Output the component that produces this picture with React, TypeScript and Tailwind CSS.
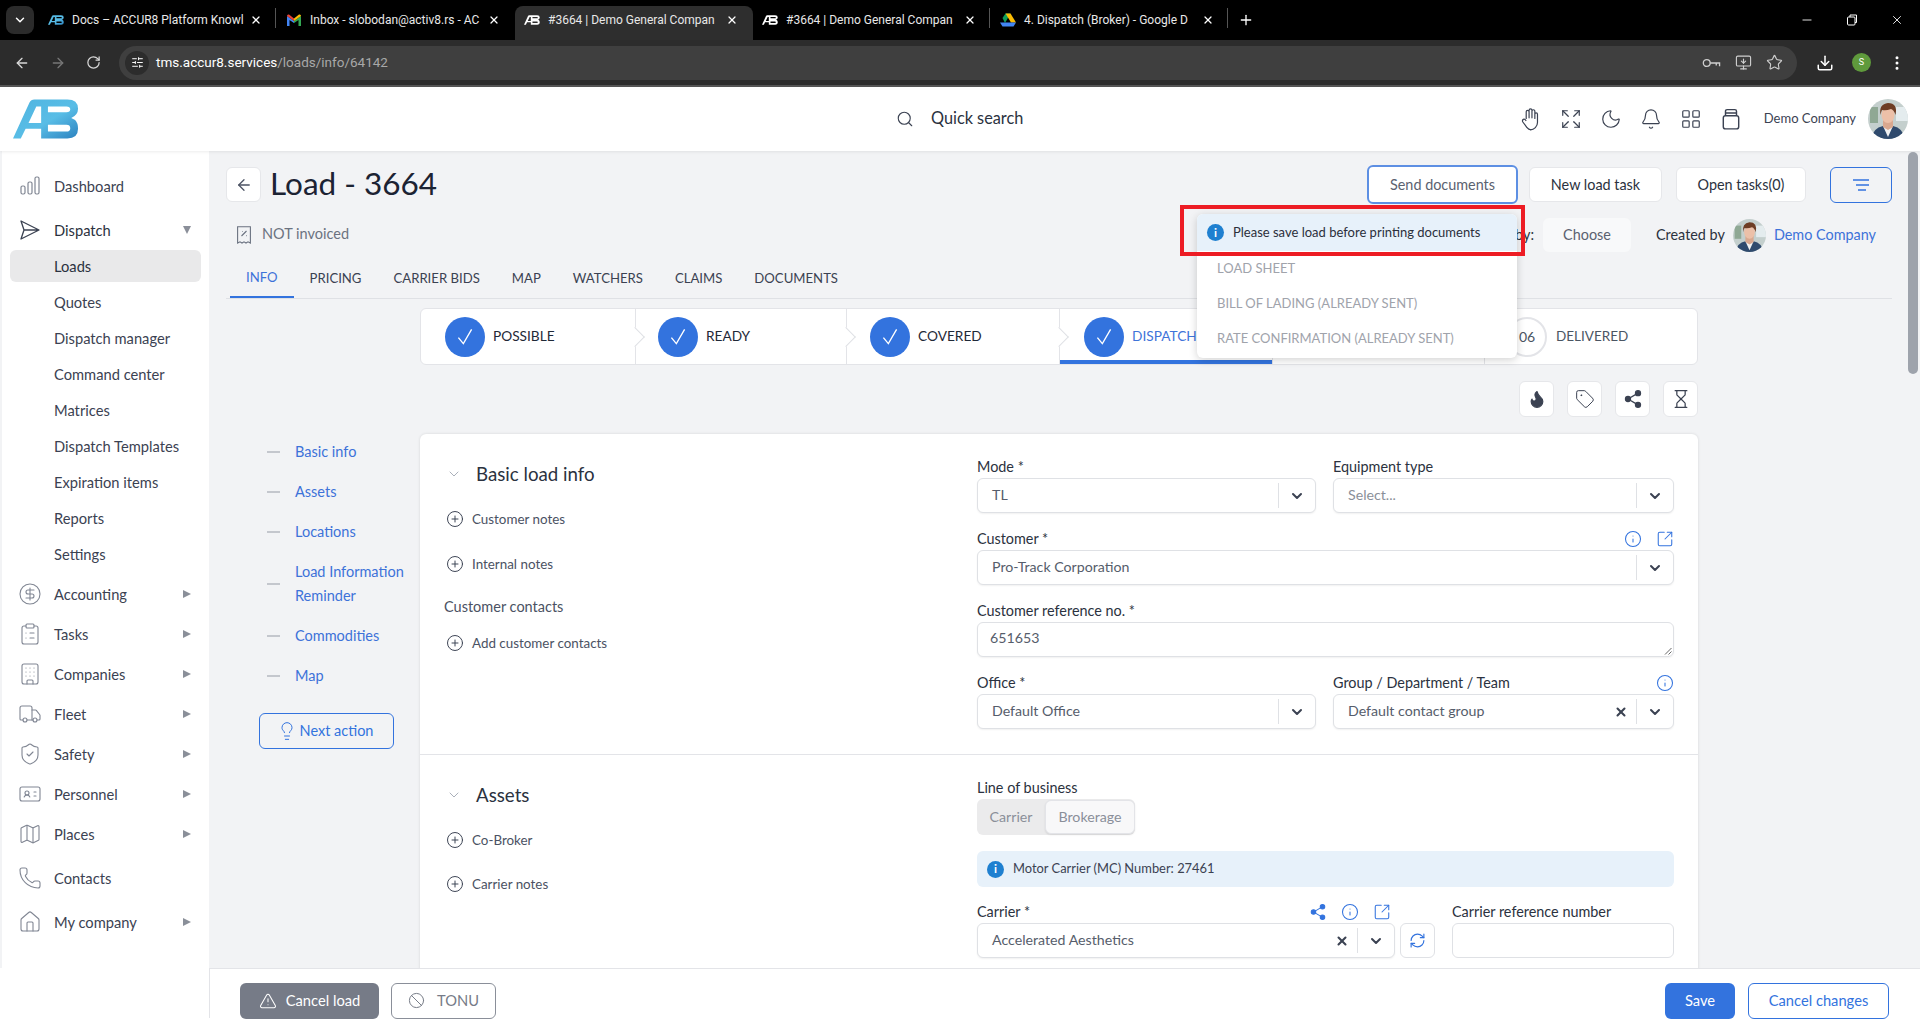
import type { ReactNode } from 'react'
import {
  ArrowLeft, ArrowRight, Ban, Bell, Building, ChevronDown, CircleDollarSign, CirclePlus, ClipboardList,
  Download, EllipsisVertical, Expand, Flame, Hourglass, House, IdCard, Info, LayoutGrid,
  Lightbulb, Map as MapIcon, Minus, MonitorDown, Moon, Phone, Plus, RefreshCw, RotateCw, Search, Share2,
  ShieldCheck, SlidersHorizontal, SquareArrowOutUpRight, Star, Tag, TriangleAlert, Truck, X,
} from 'lucide-react'

const Logo = ({ className }: { className: string }) => (
  <svg viewBox="0 0 68 42" className={className}>
    <defs>
      <linearGradient id="a8" x1="0" y1="0" x2="1" y2="1">
        <stop offset="0" stopColor="#4fb4e0" />
        <stop offset="0.55" stopColor="#59bde6" />
        <stop offset="1" stopColor="#2d83c0" />
      </linearGradient>
    </defs>
    <path
      fillRule="evenodd"
      fill="url(#a8)"
      d="M0 41 L17 4 Q18.5 1 22 1 H56 Q67 1 67 10.5 Q67 17 60 20 L64 22 Q67 25 67 31 Q67 41 56 41 H29 V31 H13 L8 41 Z
         M16 25 H29 V8 H24 Z
         M36 8 H55 Q59 8 59 11 Q59 14 55 14 H36 Z
         M36 27 H55 Q59 27 59 30.5 Q59 34 55 34 H36 Z"
    />
  </svg>
)

const Avatar = ({ className }: { className: string }) => (
  <div className={`overflow-hidden rounded-full ${className}`}>
    <svg viewBox="0 0 40 40" className="h-full w-full">
      <rect width="40" height="40" fill="#c4cfcd" />
      <rect x="2" y="8" width="8" height="16" fill="#8fa894" />
      <rect x="28" y="8" width="12" height="14" fill="#e4ecee" />
      <path d="M3 40 Q5 29 15 27 L25 27 Q35 29 37 40 Z" fill="#2f4a6d" />
      <path d="M15 27 L20 38 L25 27 Z" fill="#f1f1f1" />
      <path d="M15 20 H25 V28 L20 31 L15 28 Z" fill="#d9a88f" />
      <ellipse cx="20" cy="16" rx="6.5" ry="8" fill="#ecc0a8" />
      <path d="M12.5 16 Q10.5 5 20 4 Q30 4 27.5 16 Q26 11 23 10 Q18 12 14 11 Q13 13 12.5 16 Z" fill="#6e3d24" />
    </svg>
  </div>
)

const GmailIcon = () => (
  <svg viewBox="0 0 16 14" className="h-[14px] w-[16px] shrink-0">
    <path d="M1 13 V3 L8 8 V10 L3.5 7 V13 Z" fill="#4285f4" />
    <path d="M15 13 V3 L8 8 V10 L12.5 7 V13 Z" fill="#34a853" />
    <path d="M1 3 Q1 1 3 1.5 L8 5.5 V8 L1 3 Z" fill="#ea4335" />
    <path d="M15 3 Q15 1 13 1.5 L8 5.5 V8 Z" fill="#fbbc04" />
  </svg>
)

const DriveIcon = () => (
  <svg viewBox="0 0 16 14" className="h-[14px] w-[16px] shrink-0">
    <path d="M5.5 0.5 H10.5 L5 10 L2.5 5 Z" fill="#0f9d58" />
    <path d="M10.5 0.5 L16 9.5 H11 L5.5 0.5 Z" fill="#fbbc04" />
    <path d="M0 9.5 H16 L13.5 13.5 H2.5 Z" fill="#4285f4" />
  </svg>
)

const KeyIcon = () => (
  <svg viewBox="0 0 20 12" fill="none" stroke="currentColor" strokeWidth="1.4" className="h-[12px] w-[19px]">
    <circle cx="5" cy="6" r="3.6" />
    <path d="M8.6 6 H18.5 V9.5 M15 6 V8.5" />
  </svg>
)

const HandIcon = () => (
  <svg viewBox="0 0 20 20" fill="none" stroke="#3b4252" strokeWidth="1" strokeLinejoin="round" className="h-[24px] w-[24px]">
    <path d="M6 10 V4 a1.2 1.2 0 0 1 2.4 0 V9 V2.7 a1.2 1.2 0 0 1 2.4 0 V9 V3.5 a1.2 1.2 0 0 1 2.4 0 V9.5 V6 a1.1 1.1 0 0 1 2.2 0 V13 a6 6 0 0 1 -6 6 H10 Q8 19 6.5 17 L3.2 12.5 Q2.4 11 3.6 10.3 Q4.8 9.8 6 11.5" />
  </svg>
)

const DashboardIcon = () => (
  <svg viewBox="0 0 20 20" fill="none" stroke="#808693" strokeWidth="1.2" className="h-5 w-5">
    <rect x="1" y="10" width="4" height="8" rx="1.5" />
    <rect x="8" y="6" width="4" height="12" rx="1.5" />
    <rect x="15" y="1" width="4" height="17" rx="1.5" />
  </svg>
)

const PlaneIcon = () => (
  <svg viewBox="0 0 20 20" fill="none" stroke="#3b4252" strokeWidth="1.3" strokeLinejoin="round" className="h-5 w-5">
    <path d="M1 1 L19 10 L1 19 L4 10 Z M4 10 H19" />
  </svg>
)

const JarIcon = () => (
  <svg viewBox="0 0 20 20" fill="none" stroke="#3b4252" strokeWidth="1.3" className="h-[22px] w-[22px]">
    <rect x="3" y="7" width="14" height="12" rx="2" />
    <path d="M5 7 V3 Q5 1.5 6.5 1.5 H13.5 Q15 1.5 15 3 V7 M5 4.5 H15" />
  </svg>
)

const ReceiptIcon = () => (
  <svg viewBox="0 0 14 18" fill="none" stroke="#6b7280" strokeWidth="1.1" className="h-[18px] w-[14px]">
    <path d="M0.6 17 V0.8 H13.4 V17 L11 15.8 L9 17 L7 15.8 L5 17 L3 15.8 Z" />
    <path d="M4.5 10 L9.5 5 M5 5.5 h0.6 M9 9.6 h0.6" />
  </svg>
)

const dispatchItems = ['Loads', 'Quotes', 'Dispatch manager', 'Command center', 'Matrices', 'Dispatch Templates', 'Expiration items', 'Reports', 'Settings']

const iconClass = 'h-6 w-6 text-[#808693]'
const sections = [
  { label: 'Accounting', icon: <CircleDollarSign className={iconClass} strokeWidth={1.1} /> },
  { label: 'Tasks', icon: <ClipboardList className={iconClass} strokeWidth={1.1} /> },
  { label: 'Companies', icon: <Building className={iconClass} strokeWidth={1.1} /> },
  { label: 'Fleet', icon: <Truck className={iconClass} strokeWidth={1.1} /> },
  { label: 'Safety', icon: <ShieldCheck className={iconClass} strokeWidth={1.1} /> },
  { label: 'Personnel', icon: <IdCard className={iconClass} strokeWidth={1.1} /> },
  { label: 'Places', icon: <MapIcon className={iconClass} strokeWidth={1.1} /> },
]

function Tab({ icon, title, active, sep }: { icon: ReactNode; title: string; active?: boolean; sep?: boolean }) {
  return (
    <div className={`relative mb-0 flex h-[34px] w-[238px] shrink-0 items-center rounded-t-lg pb-[6px] pl-[9px] pr-[15px] ${active ? 'bg-[#2e2e2e]' : ''}`}>
      {icon}
      <span className="ml-2 w-[167px] whitespace-nowrap text-[12px] text-[#e8e8e8]">{title}</span>
      <X className="ml-auto h-[12px] w-[12px] text-white" strokeWidth={2.5} />
      {sep && <span className="absolute right-[1px] top-[2px] h-[20px] w-px bg-[#555]" />}
    </div>
  )
}

const TabLogo = ({ white }: { white?: boolean }) => (
  <span className={white ? 'shrink-0 brightness-0 invert' : 'shrink-0'}>
    <Logo className="h-[12px] w-[16px]" />
  </span>
)

function ChromeBar() {
  return (
    <>
      <div className="flex h-[40px] items-end bg-black pl-[6px]">
        <div className="mb-[6px] flex h-[28px] w-[28px] items-center justify-center rounded-lg bg-[#2b2b2b]">
          <ChevronDown className="h-[14px] w-[14px] text-white" strokeWidth={2.5} />
        </div>
        <div className="ml-[5px] flex items-end">
          <Tab sep icon={<TabLogo />} title="Docs – ACCUR8 Platform Knowl" />
          <Tab icon={<GmailIcon />} title="Inbox - slobodan@activ8.rs - AC" />
          <Tab active icon={<TabLogo white />} title="#3664 | Demo General Compan" />
          <Tab sep icon={<TabLogo white />} title="#3664 | Demo General Compan" />
          <Tab sep icon={<DriveIcon />} title="4. Dispatch (Broker) - Google D" />
          <Plus className="mb-[12px] ml-[9px] h-[16px] w-[16px] text-white" strokeWidth={2} />
        </div>
        <div className="ml-auto mb-[13px] flex items-center gap-[32px] pr-[16px]">
          <Minus className="h-[14px] w-[14px] text-white" strokeWidth={1.5} />
          <svg viewBox="0 0 12 12" fill="none" stroke="white" className="h-[12px] w-[12px]">
            <rect x="1.5" y="3" width="7.5" height="8" rx="1" />
            <path d="M4 3 V1 H10.5 V8.5 H9" />
          </svg>
          <X className="h-[14px] w-[14px] text-white" strokeWidth={1.5} />
        </div>
      </div>
      <div className="flex h-[47px] items-center border-b-2 border-[#555] bg-[#2c2c2c] pl-[14px] pr-[14px]">
        <ArrowLeft className="h-[16px] w-[16px] text-[#d8d8d8]" strokeWidth={2} />
        <ArrowRight className="ml-[20px] h-[16px] w-[16px] text-[#777]" strokeWidth={2} />
        <RotateCw className="ml-[20px] h-[15px] w-[15px] text-[#d8d8d8]" strokeWidth={2} />
        <div className="ml-[18px] flex h-[34px] w-[1678px] items-center rounded-full bg-[#3f3f3f] pl-[6px]">
          <div className="flex h-[24px] w-[24px] items-center justify-center rounded-full bg-[#2c2c2c]">
            <SlidersHorizontal className="h-[13px] w-[13px] text-white" strokeWidth={1.8} />
          </div>
          <span className="ml-[7px] text-[13.5px] text-white">
            tms.accur8.services<span className="text-[#a8a8a8]">/loads/info/64142</span>
          </span>
          <div className="ml-auto flex items-center gap-[14px] pr-[14px] text-[#cfcfcf]">
            <KeyIcon />
            <MonitorDown className="h-[17px] w-[17px]" strokeWidth={1.6} />
            <Star className="h-[17px] w-[17px]" strokeWidth={1.6} />
          </div>
        </div>
        <Download className="ml-[19px] h-[18px] w-[18px] text-white" strokeWidth={2} />
        <div className="ml-[18px] flex h-[19px] w-[19px] items-center justify-center rounded-full bg-[#5f9a3c] text-[9px] text-white">S</div>
        <EllipsisVertical className="ml-[17px] h-[18px] w-[18px] text-white" strokeWidth={2} />
      </div>
    </>
  )
}

function AppHeader() {
  const cls = 'h-[22px] w-[22px] text-[#3b4252]'
  return (
    <header className="relative z-10 flex h-[64px] items-center bg-white pl-[13px] pr-[12px] shadow-[0_1px_3px_rgba(0,0,0,0.08)]">
      <Logo className="h-[42px] w-[66px]" />
      <div className="ml-[817px] flex items-center">
        <Search className="h-[18px] w-[18px] text-[#3b4252]" strokeWidth={1.5} />
        <span className="ml-[17px] pb-[1px] text-[16.3px] text-[#2b3240]">Quick search</span>
      </div>
      <div className="ml-auto flex items-center gap-[18px]">
        <span className="-mx-[1px]"><HandIcon /></span>
        <Expand className={cls} strokeWidth={1.3} />
        <Moon className={cls} strokeWidth={1.3} />
        <Bell className={cls} strokeWidth={1.3} />
        <LayoutGrid className={cls} strokeWidth={1.3} />
        <JarIcon />
        <span className="ml-[4px] text-[13px] text-[#3b4252]">Demo Company</span>
        <Avatar className="-ml-[6px] h-[40px] w-[40px]" />
      </div>
    </header>
  )
}

const Caret = ({ down }: { down?: boolean }) => (
  <span className={`ml-auto mr-[18px] h-0 w-0 border-transparent ${down ? 'border-x-[4px] border-t-[8px] border-t-[#8a8f99]' : 'border-y-[4px] border-l-[8px] border-l-[#8a8f99]'}`} />
)

function Sidebar() {
  return (
    <aside className="h-[817px] w-[209px] shrink-0 border-l-2 border-[#f2f3f5] bg-white pt-[17px] text-[14.7px] text-[#3b4252]">
      <div className="flex h-[36px] items-center">
        <span className="ml-[18px] w-[34px]"><DashboardIcon /></span>
        Dashboard
      </div>
      <div className="mt-[8px] flex h-[36px] items-center text-[#2b3240]">
        <span className="ml-[18px] w-[34px]"><PlaneIcon /></span>
        Dispatch
        <Caret down />
      </div>
      <div className="mt-[2px] flex flex-col gap-[4px] pl-[8px] pr-[8px]">
        {dispatchItems.map((label, i) => (
          <div key={label} className={`flex h-[32px] items-center rounded-md pl-[44px] ${i === 0 ? 'bg-[#e9e9ea] text-[#2b3240]' : ''}`}>
            {label}
          </div>
        ))}
      </div>
      <div className="mt-[4px]">
        {sections.map((s) => (
          <div key={s.label} className="flex h-[40px] items-center">
            <span className="ml-[16px] w-[36px]">{s.icon}</span>
            {s.label}
            <Caret />
          </div>
        ))}
      </div>
      <div className="mt-[4px] flex h-[40px] items-center">
        <span className="ml-[16px] w-[36px]"><Phone className={iconClass} strokeWidth={1.1} /></span>
        Contacts
      </div>
      <div className="mt-[4px] flex h-[40px] items-center">
        <span className="ml-[16px] w-[36px]"><House className={iconClass} strokeWidth={1.1} /></span>
        My company
        <Caret />
      </div>
    </aside>
  )
}

const steps = [
  { label: 'POSSIBLE', cls: 'w-[215px] pl-[24px]' },
  { label: 'READY', cls: 'w-[211px] pl-[22px]' },
  { label: 'COVERED', cls: 'w-[213px] pl-[23px]' },
  { label: 'DISPATCHED', cls: 'w-[213px] pl-[24px]', active: true },
]

const Notch = () => (
  <span className="absolute -right-[7px] top-[21px] z-10 h-[14px] w-[14px] rotate-45 border-r border-t border-[#dfe1e5] bg-white" />
)

function Stepper() {
  return (
    <div className="flex h-[57px] w-[1278px] rounded-md border border-[#e3e4e8] bg-white">
      {steps.map((s) => (
        <div key={s.label} className={`relative flex h-full shrink-0 items-center border-r border-[#e3e4e8] ${s.cls} ${s.active ? 'shadow-[inset_0_-4px_0_#3373de]' : ''}`}>
          <span className="flex h-[40px] w-[40px] items-center justify-center rounded-full bg-[#3373de]">
            <svg viewBox="0 0 20 20" fill="none" stroke="white" strokeWidth="1.2" className="h-[22px] w-[22px]">
              <path d="M4 10.5 L8.5 16 L16 3" />
            </svg>
          </span>
          <span className={`ml-[8px] text-[13.7px] ${s.active ? 'text-[#3f74d9]' : 'text-[#1f2937]'}`}>{s.label}</span>
          <Notch />
        </div>
      ))}
      <div className="relative h-full w-[212px] shrink-0 border-r border-[#e3e4e8]"><Notch /></div>
      <div className="flex flex-1 items-center pl-[22px]">
        <span className="flex h-[40px] w-[40px] items-center justify-center rounded-full border-2 border-[#e3e4e8] text-[14px] text-[#4b5563]">06</span>
        <span className="ml-[9px] text-[13.5px] text-[#4b5563]">DELIVERED</span>
      </div>
    </div>
  )
}

const Select = ({ value, placeholder, clear, className = '' }: { value?: string; placeholder?: string; clear?: boolean; className?: string }) => (
  <div className={`flex h-[35px] items-center rounded-md border border-[#dfe1e5] bg-white pl-[14px] text-[14.2px] shadow-[0_1px_2px_rgba(0,0,0,0.06)] ${className}`}>
    <span className={`pb-[2px] ${placeholder ? 'text-[#8a8f99]' : 'text-[#565d6b]'}`}>{value ?? placeholder}</span>
    {clear && <X className="ml-auto h-[14px] w-[14px] text-[#3b4252]" strokeWidth={3.5} />}
    <span className={`h-[25px] w-px bg-[#dfe1e5] ${clear ? 'ml-[8px]' : 'ml-auto'}`} />
    <ChevronDown className="mx-[10px] h-[16px] w-[16px] text-[#3b4252]" strokeWidth={3} />
  </div>
)

const Label = ({ children, right }: { children: ReactNode; right?: ReactNode }) => (
  <div className="mb-px flex h-[20px] items-center justify-between text-[14.4px] text-[#2b3240]">
    <span>{children}</span>
    {right}
  </div>
)

const blueIcon = 'h-[18px] w-[18px] text-[#3373de]'

const AddRow = ({ label, className }: { label: string; className: string }) => (
  <div className={`flex h-[24px] items-center text-[13.4px] text-[#4b5263] ${className}`}>
    <CirclePlus className="h-[18px] w-[18px] text-[#3b4252]" strokeWidth={1.3} />
    <span className="ml-[8px]">{label}</span>
  </div>
)

const SectionTitle = ({ title }: { title: string }) => (
  <div className="flex h-[30px] items-center">
    <ChevronDown className="h-[16px] w-[16px] text-[#9ca3af]" strokeWidth={1.3} />
    <span className="ml-[14px] text-[18.7px] text-[#2b3240]">{title}</span>
  </div>
)

function FormCard() {
  return (
    <div className="w-[1278px] shrink-0 rounded-md bg-white shadow-[0_0_3px_rgba(0,0,0,0.12)]">
      <div className="flex h-[321px] border-b border-[#e3e4e8] pl-[26px]">
        <div className="w-[531px] shrink-0 pt-[25px]">
          <SectionTitle title="Basic load info" />
          <AddRow label="Customer notes" className="mt-[18px]" />
          <AddRow label="Internal notes" className="mt-[21px]" />
          <div className="mt-[19px] flex h-[24px] -ml-[2px] items-center text-[14.5px] text-[#4b5263]">Customer contacts</div>
          <AddRow label="Add customer contacts" className="mt-[12px]" />
        </div>
        <div className="grid grid-cols-[339px_341px] gap-x-[17px] gap-y-[16px] self-start pt-[23px]">
          <div>
            <Label>Mode *</Label>
            <Select value="TL" />
          </div>
          <div>
            <Label>Equipment type</Label>
            <Select placeholder="Select..." />
          </div>
          <div className="col-span-2">
            <Label right={<span className="flex gap-[14px]"><Info className={blueIcon} strokeWidth={1.4} /><SquareArrowOutUpRight className={blueIcon} strokeWidth={1.4} /></span>}>Customer *</Label>
            <Select value="Pro-Track Corporation" />
          </div>
          <div className="col-span-2">
            <Label>Customer reference no. *</Label>
            <div className="relative flex h-[35px] items-center rounded-md border border-[#dfe1e5] bg-white pb-[4px] pl-[12px] text-[14.2px] text-[#565d6b] shadow-[0_1px_2px_rgba(0,0,0,0.06)]">
              651653
              <svg viewBox="0 0 8 8" stroke="#666" fill="none" className="absolute bottom-px right-px h-[8px] w-[8px]">
                <path d="M1 7.5 L7.5 1 M4.5 7.5 L7.5 4.5" />
              </svg>
            </div>
          </div>
          <div>
            <Label>Office *</Label>
            <Select value="Default Office" />
          </div>
          <div>
            <Label right={<Info className={blueIcon} strokeWidth={1.4} />}>Group / Department / Team</Label>
            <Select value="Default contact group" clear />
          </div>
        </div>
      </div>
      <div className="flex h-[260px] pl-[26px]">
        <div className="w-[531px] shrink-0 pt-[25px]">
          <SectionTitle title="Assets" />
          <AddRow label="Co-Broker" className="mt-[18px]" />
          <AddRow label="Carrier notes" className="mt-[20px]" />
        </div>
        <div className="w-[697px] pt-[23px]">
          <Label>Line of business</Label>
          <div className="flex h-[36px] w-[158px] items-center rounded-md bg-[#ebebec] text-[14.2px] text-[#8a8f99]">
            <span className="w-[68px] text-center">Carrier</span>
            <span className="flex h-[34px] flex-1 items-center justify-center rounded-md border border-[#e3e4e8] bg-[#f8f8f9] shadow-[0_1px_2px_rgba(0,0,0,0.1)]">Brokerage</span>
          </div>
          <div className="mt-[16px] flex h-[36px] items-center rounded-md bg-[#e7f1fa] pl-[10px] text-[12.9px] text-[#3b4252]">
            <InfoDot />
            <span className="ml-[9px]">Motor Carrier (MC) Number: 27461</span>
          </div>
          <div className="mt-[15px] flex gap-[17px]">
            <div className="flex w-[458px] items-end gap-[5px]">
              <div className="w-[418px]">
                <Label right={<span className="mr-[4px] flex gap-[14px]"><Share2 className={`${blueIcon} fill-[#3373de]`} strokeWidth={1.4} /><Info className={blueIcon} strokeWidth={1.4} /><SquareArrowOutUpRight className={blueIcon} strokeWidth={1.4} /></span>}>Carrier *</Label>
                <Select value="Accelerated Aesthetics" clear />
              </div>
              <div className="flex h-[35px] w-[35px] items-center justify-center rounded-md border border-[#dfe1e5] bg-white">
                <RefreshCw className="h-[17px] w-[17px] text-[#3373de]" strokeWidth={1.6} />
              </div>
            </div>
            <div className="w-[222px]">
              <Label>Carrier reference number</Label>
              <div className="h-[35px] rounded-md border border-[#dfe1e5] bg-white" />
            </div>
          </div>
        </div>
      </div>
    </div>
  )
}

const InfoDot = () => (
  <span className="flex h-[17px] w-[17px] shrink-0 items-center justify-center rounded-full bg-[#1f80d0] text-[12px] font-bold leading-none text-white">i</span>
)

const anchors = ['Basic info', 'Assets', 'Locations', 'Load Information Reminder', 'Commodities', 'Map']

function Anchors() {
  return (
    <div className="-mt-[2px] w-[211px] shrink-0">
      {anchors.map((a) => (
        <div key={a} className={`flex items-center text-[14.5px] leading-[24px] text-[#3d72d9] ${a.length > 20 ? 'h-[64px]' : 'h-[40px]'}`}>
          <span className="ml-[58px] h-[2px] w-[13px] bg-[#c4c7cd]" />
          <span className="ml-[15px] w-[120px]">{a}</span>
        </div>
      ))}
      <div className="ml-[50px] mt-[17px] flex h-[36px] w-[135px] items-center justify-center rounded-md border border-[#3373de] pb-[1px] pr-[3px] text-[14.5px] text-[#3373de]">
        <Lightbulb className="mr-[3px] h-[20px] w-[20px]" strokeWidth={1.2} />
        Next action
      </div>
    </div>
  )
}

const topBtn = 'flex items-center justify-center rounded-md bg-white text-[14.4px] text-[#2b3240]'
const tabs = ['INFO', 'PRICING', 'CARRIER BIDS', 'MAP', 'WATCHERS', 'CLAIMS', 'DOCUMENTS']
const actionIcon = 'h-[20px] w-[20px] text-[#3b4252]'

function Main() {
  return (
    <main className="flex h-[867px] min-w-0 flex-1 flex-col bg-[#f2f3f5]">
      <div className="min-h-0 flex-1 overflow-hidden">
        <div className="flex h-[51px] items-center pl-[17px] pr-[28px] pt-[16px]">
          <div className="flex h-[35px] w-[35px] items-center justify-center rounded-md border border-[#e6e7ea] bg-white">
            <ArrowLeft className="h-[18px] w-[18px] text-[#4b5263]" strokeWidth={1.7} />
          </div>
          <h1 className="ml-[9px] -mt-[3px] text-[31.5px] leading-[35px] text-[#1c2333]">Load - 3664</h1>
          <div className="ml-auto flex items-center">
            <div className={`${topBtn} -my-[2px] h-[39px] w-[151px] border-2 border-[#5d8fe3] text-[#5b6270]`}>Send documents</div>
            <div className={`${topBtn} ml-[11px] h-[35px] w-[133px] border border-[#e6e7ea]`}>New load task</div>
            <div className={`${topBtn} ml-[14px] h-[35px] w-[130px] border border-[#e6e7ea]`}>Open tasks(0)</div>
            <div className="ml-[24px] flex h-[36px] w-[62px] items-center justify-center rounded-md border border-[#3373de]">
              <svg viewBox="0 0 16 12" stroke="#3373de" strokeWidth="1.4" className="h-[12px] w-[16px]">
                <path d="M0 1 H16 M3 6 H16 M5 11 H13" />
              </svg>
            </div>
          </div>
        </div>
        <div className="mt-[16px] flex h-[34px] items-center pl-[28px] pr-[44px]">
          <ReceiptIcon />
          <span className="ml-[11px] pb-[3px] text-[14.5px] text-[#6b7280]">NOT invoiced</span>
          <span className="ml-auto pb-[1px] text-[14.4px] text-[#2b3240]">by:</span>
          <div className="ml-[9px] flex h-[34px] w-[88px] items-center justify-center rounded-md bg-[#f8f9fa] pb-[1px] text-[14.4px] text-[#5b6270]">Choose</div>
          <span className="ml-[25px] pb-[1px] text-[14.4px] text-[#2b3240]">Created by</span>
          <Avatar className="ml-[8px] h-[33px] w-[33px]" />
          <span className="ml-[8px] pb-[1px] text-[14.4px] text-[#3d72d9]">Demo Company</span>
        </div>
        <div className="ml-[17px] mr-[28px] flex h-[47px] items-end border-b border-[#dfe1e5] pl-[4px]">
          {tabs.map((t, i) => (
            <div key={t} className={`flex h-[40px] items-center px-[16px] pt-[2px] text-[13.15px] ${i === 0 ? 'border-b-2 border-[#3373de] text-[#3d72d9]' : 'text-[#3b4252]'}`}>{t}</div>
          ))}
        </div>
        <div className="ml-[211px] mt-[9px]">
          <Stepper />
          <div className="mt-[16px] flex w-[1278px] justify-end gap-[13px]">
            {[
              <Flame key="f" className={`${actionIcon} fill-[#3b4252]`} strokeWidth={1.4} />,
              <Tag key="t" className={actionIcon} strokeWidth={1.2} />,
              <Share2 key="s" className={`${actionIcon} fill-[#3b4252]`} strokeWidth={1.6} />,
              <Hourglass key="h" className={actionIcon} strokeWidth={1.5} />,
            ].map((icon) => (
              <div key={icon.key} className="flex h-[36px] w-[35px] items-center justify-center rounded-md border border-[#e6e7ea] bg-white">{icon}</div>
            ))}
          </div>
        </div>
        <div className="mt-[17px] flex">
          <Anchors />
          <FormCard />
        </div>
      </div>
      <div className="flex h-[50px] shrink-0 border-l border-t border-[#e3e4e8] bg-white pl-[30px] pr-[31px] pt-[14px]">
        <div className="flex h-[36px] w-[139px] items-center justify-center gap-[9px] rounded-md bg-[#767b87] pb-[1px] text-[14.7px] text-white">
          <TriangleAlert className="h-[18px] w-[18px]" strokeWidth={1.4} />
          Cancel load
        </div>
        <div className="ml-[12px] flex h-[36px] w-[105px] items-center justify-center gap-[12px] rounded-md border border-[#8a8f99] pb-[1px] text-[14.7px] text-[#767b87]">
          <Ban className="h-[17px] w-[17px]" strokeWidth={1.4} />
          TONU
        </div>
        <div className="ml-auto flex h-[36px] w-[70px] items-center justify-center rounded-md bg-[#3373de] pb-[1px] text-[14.7px] text-white">Save</div>
        <div className="ml-[13px] flex h-[36px] w-[141px] items-center justify-center rounded-md border border-[#3373de] pb-[1px] text-[14.7px] text-[#3373de]">Cancel changes</div>
      </div>
    </main>
  )
}

function DocsMenu() {
  return (
    <>
      <div className="absolute left-[1197px] top-[214px] z-20 w-[320px] overflow-hidden rounded-md bg-white pb-[2px] shadow-[0_2px_8px_rgba(0,0,0,0.18)]">
        <div className="flex h-[37px] items-center bg-[#e7f1fa] pl-[10px] text-[13px] text-[#2b2f3a]">
          <InfoDot />
          <span className="ml-[9px]">Please save load before printing documents</span>
        </div>
        <div className="flex flex-col pl-[20px] text-[13px] text-[#a0a3ab]">
          <div className="flex h-[35px] items-center">LOAD SHEET</div>
          <div className="flex h-[35px] items-center">BILL OF LADING (ALREADY SENT)</div>
          <div className="flex h-[35px] items-center">RATE CONFIRMATION (ALREADY SENT)</div>
        </div>
      </div>
      <div className="absolute left-[1180px] top-[205px] z-30 h-[51px] w-[345px] border-4 border-[#ed1c24]" />
    </>
  )
}

export default function App() {
  return (
    <div className="relative h-[1032px] w-[1920px] overflow-hidden bg-white font-['Lato',sans-serif]">
      <div className="font-['Roboto',sans-serif]">
        <ChromeBar />
      </div>
      <AppHeader />
      <div className="flex">
        <Sidebar />
        <Main />
      </div>
      <DocsMenu />
      <div className="absolute left-[1908px] top-[152px] z-10 h-[222px] w-[10px] rounded-full bg-[#9ea3ac]" />
    </div>
  )
}
